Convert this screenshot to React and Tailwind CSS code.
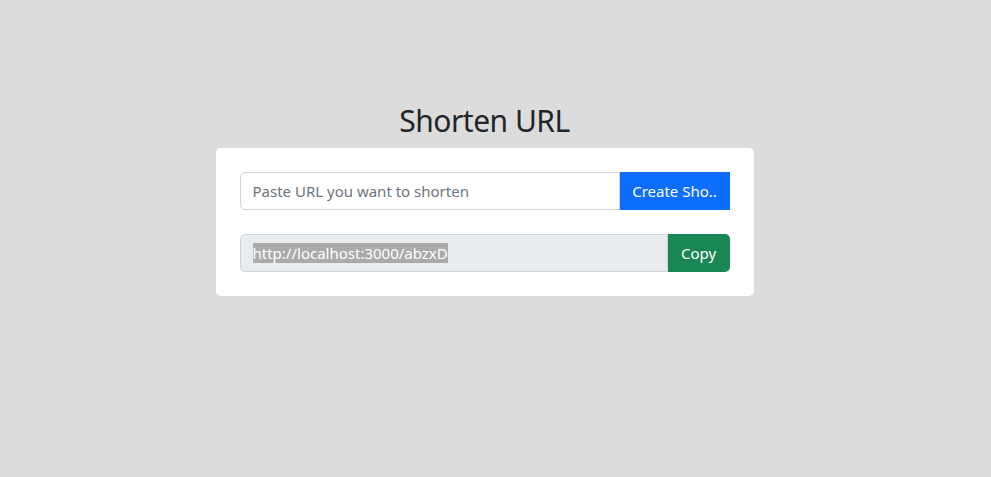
export default function App() {
  return (
    <div
      className="min-h-[477px] w-full bg-[#dcdcdc] pt-[102px] pr-[22px] flex flex-col items-center text-[#212529]"
      style={{ fontFamily: '"Noto Sans", "Open Sans", sans-serif' }}
    >
      <h2 className="text-[30px] leading-[38px] tracking-[-0.5px] font-normal mb-2">Shorten URL</h2>
      <div className="w-[538px] bg-white rounded-[5px] p-6 flex flex-col gap-6">
        <div className="flex h-[38px]">
          <div className="flex-1 flex items-center border border-[#ced4da] rounded-l-[5px] px-3 text-[15px] text-[#6c757d]">
            Paste URL you want to shorten
          </div>
          <button className="w-[110px] bg-[#0d6efd] text-white text-[15px] px-3 whitespace-nowrap">
            Create Sho..
          </button>
        </div>
        <div className="flex h-[38px]">
          <div className="flex-1 flex items-center bg-[#e9ecef] border border-[#ced4da] rounded-l-[5px] px-3 text-[15px]">
            <span className="bg-[#aaaaaa] text-white leading-[20px]">http://localhost:3000/abzxD</span>
          </div>
          <button className="w-[62px] bg-[#198754] text-white text-[15px] rounded-r-[5px]">Copy</button>
        </div>
      </div>
    </div>
  )
}
